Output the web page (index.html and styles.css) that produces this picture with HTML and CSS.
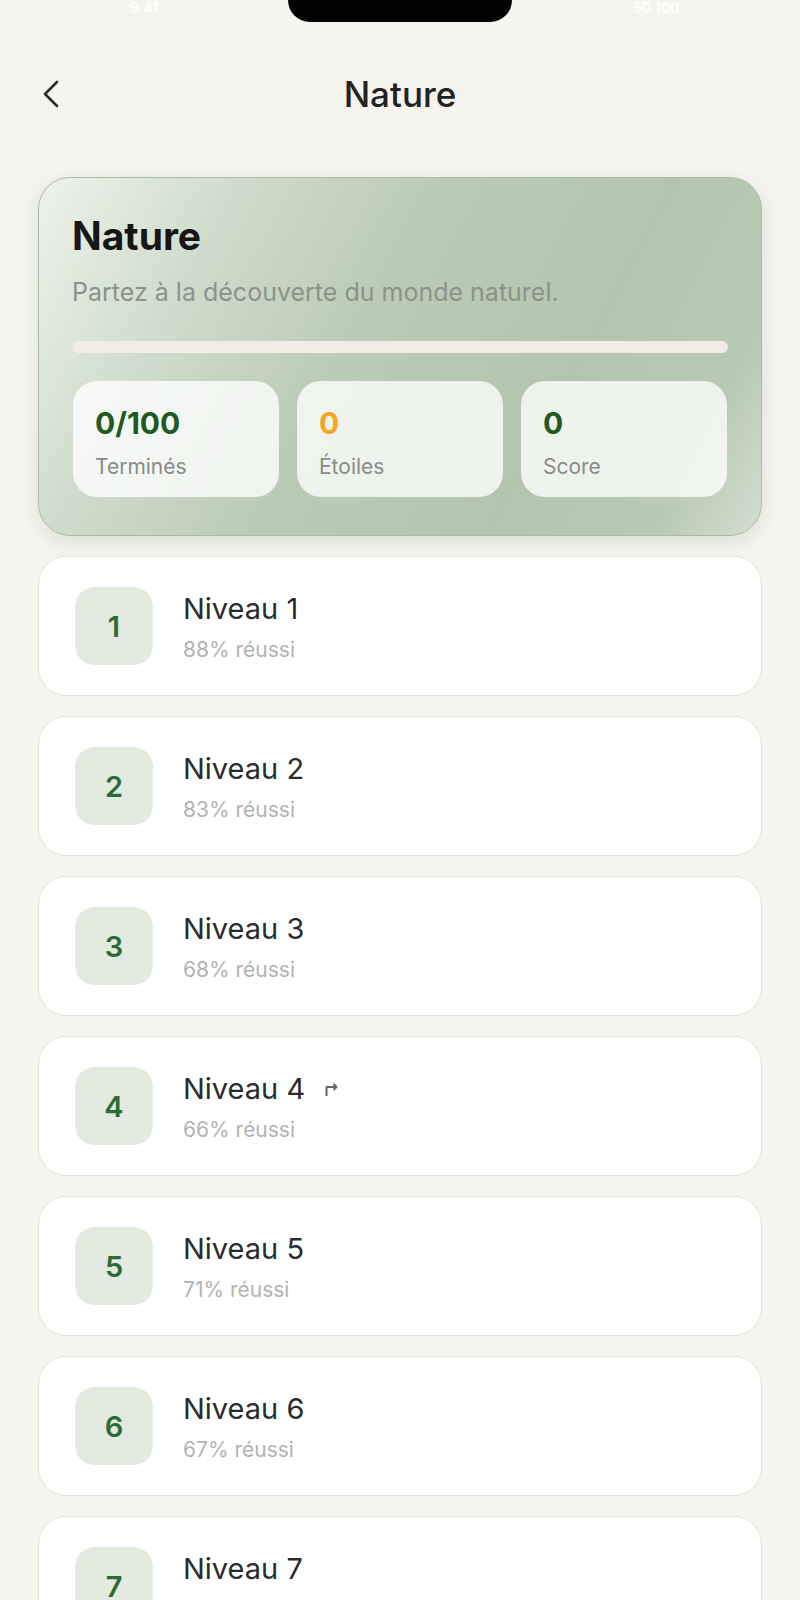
FILE: index.html
```html
<!DOCTYPE html>
<html lang="fr">
<head>
  <meta charset="UTF-8" />
  <meta name="viewport" content="width=device-width, initial-scale=1.0"/>
  <title>Nature</title>
  <link rel="stylesheet" href="styles.css">
</head>
<body>
  <div class="status">
    <span class="status-time">9:41</span>
    <div class="notch"></div>
    <span class="status-icons">5G 100</span>
  </div>

  <div class="nav">
    <a href="#" class="back">
      <svg width="18" height="28" viewBox="0 0 18 28" fill="none">
        <polyline points="15,2 3,14 15,26" stroke="#2b2b2b" stroke-width="2.6" stroke-linecap="round" stroke-linejoin="round"/>
      </svg>
    </a>
    <h1>Nature</h1>
    <span></span>
  </div>

  <div class="content">
    <div class="hero">
      <h2>Nature</h2>
      <p>Partez à la découverte du monde naturel.</p>
      <div class="progress"><div class="progress-fill" style="width: 0%"></div></div>
      <div class="stats">
        <div class="stat">
          <div class="stat-value">0/100</div>
          <div class="stat-label">Terminés</div>
        </div>
        <div class="stat">
          <div class="stat-value orange">0</div>
          <div class="stat-label">Étoiles</div>
        </div>
        <div class="stat">
          <div class="stat-value">0</div>
          <div class="stat-label">Score</div>
        </div>
      </div>
    </div>

    <div class="levels">
      <div class="level">
        <div class="badge">1</div>
        <div class="level-info">
          <div class="level-title">Niveau 1</div>
          <div class="level-rate">88% réussi</div>
        </div>
      </div>
      <div class="level">
        <div class="badge">2</div>
        <div class="level-info">
          <div class="level-title">Niveau 2</div>
          <div class="level-rate">83% réussi</div>
        </div>
      </div>
      <div class="level">
        <div class="badge">3</div>
        <div class="level-info">
          <div class="level-title">Niveau 3</div>
          <div class="level-rate">68% réussi</div>
        </div>
      </div>
      <div class="level">
        <div class="badge">4</div>
        <div class="level-info">
          <div class="level-title">Niveau 4
            <svg class="resume" width="16" height="16" viewBox="0 0 16 16" fill="none">
              <path d="M3.5 15V6H13" stroke="#666" stroke-width="2" stroke-linejoin="round"/>
              <path d="M10.5 3L13.5 6L10.5 9" stroke="#666" stroke-width="2" stroke-linejoin="round"/>
            </svg>
          </div>
          <div class="level-rate">66% réussi</div>
        </div>
      </div>
      <div class="level">
        <div class="badge">5</div>
        <div class="level-info">
          <div class="level-title">Niveau 5</div>
          <div class="level-rate">71% réussi</div>
        </div>
      </div>
      <div class="level">
        <div class="badge">6</div>
        <div class="level-info">
          <div class="level-title">Niveau 6</div>
          <div class="level-rate">67% réussi</div>
        </div>
      </div>
      <div class="level">
        <div class="badge">7</div>
        <div class="level-info">
          <div class="level-title">Niveau 7</div>
          <div class="level-rate">70% réussi</div>
        </div>
      </div>
    </div>
  </div>
</body>
</html>
```

FILE: styles.css
```css
body {
  font-family: Inter, "Noto Sans", sans-serif;
  background-color: #f5f4ef;
  margin: 0;
  color: #2b2b2b;
}
.status {
  height: 22px;
  display: grid;
  grid-template-columns: 1fr auto 1fr;
  align-items: start;
}
.status-time, .status-icons {
  color: #fff;
  font-size: 14px;
  font-weight: 600;
  line-height: 16px;
}
.status-time {
  justify-self: center;
}
.status-icons {
  justify-self: center;
}
.notch {
  width: 224px;
  height: 22px;
  background: #000;
  border-radius: 0 0 24px 24px;
}
.nav {
  height: 144px;
  display: grid;
  grid-template-columns: 1fr auto 1fr;
  align-items: center;
  padding: 0 42px;
}
.back {
  display: flex;
  align-items: center;
}
.nav h1 {
  margin: 0;
  font-size: 35px;
  font-weight: 500;
  color: #222;
}
.content {
  padding: 11px 38px 40px;
}
.hero {
  padding: 35px 33px 38px;
  border-radius: 32px;
  border: 1px solid #a8bda3;
  background: linear-gradient(118deg, #eef2ec 0%, #cfdccb 22%, #b9cbb4 45%, #b3c6ad 70%, #b8cab3 88%, #d3ded0 100%);
  box-shadow: 0 6px 20px rgba(60, 80, 60, 0.12);
}
.hero h2 {
  margin: 0;
  font-size: 39px;
  line-height: 46px;
  font-weight: 700;
  color: #161616;
}
.hero p {
  margin: 18px 0 0;
  font-size: 25px;
  line-height: 30px;
  color: #8c9289;
}
.progress {
  margin-top: 34px;
  height: 12px;
  border-radius: 6px;
  background-color: #f1ede6;
}
.progress-fill {
  height: 100%;
  border-radius: 6px;
  background-color: #2f6a35;
}
.stats {
  display: grid;
  grid-template-columns: repeat(3, 1fr);
  gap: 18px;
  margin-top: 28px;
  padding: 0 1px;
}
.stat {
  padding: 24px 22px 16px;
  border-radius: 24px;
  background: rgba(255, 255, 255, 0.78);
}
.stat-value {
  font-size: 30px;
  line-height: 36px;
  font-weight: 700;
  color: #1e5a22;
}
.stat-value.orange {
  color: #f5a623;
}
.stat-label {
  margin-top: 12px;
  font-size: 21px;
  line-height: 28px;
  color: #8a8a8a;
}
.levels {
  display: flex;
  flex-direction: column;
  gap: 20px;
  margin-top: 20px;
}
.level {
  height: 140px;
  box-sizing: border-box;
  display: flex;
  align-items: center;
  gap: 30px;
  padding: 0 36px;
  background: #fff;
  border: 1.5px solid #e6e1d6;
  border-radius: 28px;
}
.badge {
  width: 78px;
  height: 78px;
  border-radius: 20px;
  background-color: #e3ebe0;
  color: #2d6a35;
  font-size: 29px;
  font-weight: 600;
  display: flex;
  align-items: center;
  justify-content: center;
}
.level-info {
  margin-top: 2px;
}
.level-title {
  display: flex;
  align-items: center;
  gap: 18px;
  font-size: 29px;
  line-height: 36px;
  color: #2b2b2b;
}
.level-rate {
  margin-top: 10px;
  font-size: 21px;
  line-height: 26px;
  color: #b3b3b3;
}
```
